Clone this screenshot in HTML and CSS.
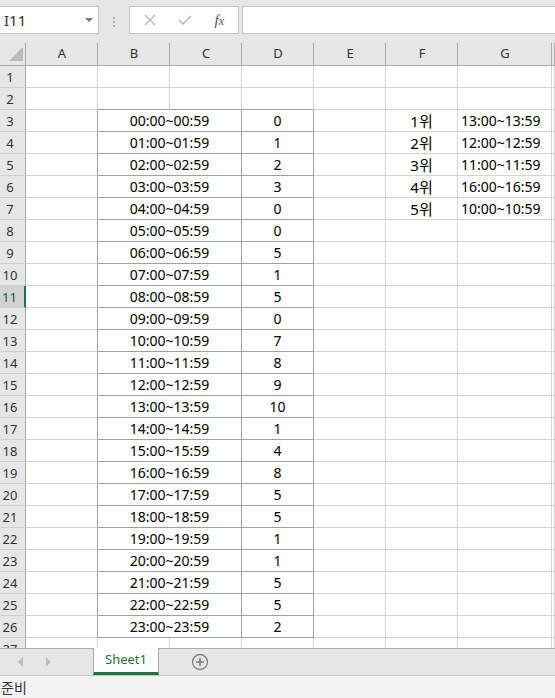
FILE: index.html
```html
<!DOCTYPE html>
<html lang="ko">
<head>
    <meta charset="UTF-8">
    <meta name="viewport" content="width=device-width, initial-scale=1.0">
    <title>Sheet1 - Excel</title>
    <link rel="stylesheet" href="styles.css">
</head>
<body>

    <div class="formula-bar">
        <div class="name-box"><span>I11</span><span class="drop"></span></div>
        <div class="grip"><i></i><i></i><i></i></div>
        <div class="fx-box">
            <svg class="btn-icon" width="12" height="12" viewBox="0 0 12 12">
                <path d="M1 1 L11 11 M11 1 L1 11" stroke="#b8b8b8" stroke-width="1.4" fill="none"/>
            </svg>
            <svg class="btn-icon" width="14" height="12" viewBox="0 0 14 12">
                <path d="M1 6 L5 10 L13 2" stroke="#b8b8b8" stroke-width="1.5" fill="none"/>
            </svg>
            <span class="fx"><i>f</i><i class="fx-sub">x</i></span>
        </div>
        <div class="formula-input"></div>
    </div>

    <div class="col-heads">
        <div class="corner"><span class="tri"></span></div>
        <div class="ch">A</div>
        <div class="ch">B</div>
        <div class="ch">C</div>
        <div class="ch">D</div>
        <div class="ch">E</div>
        <div class="ch">F</div>
        <div class="ch">G</div>
        <div class="ch"></div>
    </div>

    <div class="sheet" id="sheet"></div>

    <div class="tab-bar">
        <span class="nav nav-prev"></span>
        <span class="nav nav-next"></span>
        <div class="tab">Sheet1</div>
        <svg class="add-sheet" width="18" height="18" viewBox="0 0 18 18">
            <circle cx="9" cy="9" r="7.5" stroke="#7f7f7f" stroke-width="1.3" fill="none"/>
            <path d="M9 5 V13 M5 9 H13" stroke="#7f7f7f" stroke-width="1.6"/>
        </svg>
    </div>

    <div class="status">준비</div>

    <script>
        // D열 건수
        const counts = [0, 1, 2, 3, 0, 0, 5, 1, 5, 0, 7, 8, 9, 10, 1, 4, 8, 5, 5, 1, 1, 5, 5, 2];
        const ranks = ["13:00~13:59", "12:00~12:59", "11:00~11:59", "16:00~16:59", "10:00~10:59"];

        function pad(n) {
            return String(n).padStart(2, "0");
        }

        function cell(cls, text) {
            return `<div class="${cls}">${text ?? ""}</div>`;
        }

        let html = "";
        for (let r = 1; r <= 27; r++) {
            const inTable = r >= 3 && r <= 26;
            html += cell(r === 11 ? "rh sel" : "rh", r);
            html += cell(inTable ? "c edge" : "c");

            if (inTable) {
                const h = pad(r - 3);
                html += cell("c t span2", `${h}:00~${h}:59`);
                html += cell("c t", counts[r - 3]);
            } else {
                const cls = r === 2 ? "c top" : "c";
                html += cell(cls) + cell(cls) + cell(cls);
            }

            html += cell("c");
            if (r >= 3 && r <= 7) {
                html += cell("c rank", `${r - 2}위`);
                html += cell("c left", ranks[r - 3]);
            } else {
                html += cell("c") + cell("c");
            }
            html += cell("c");
        }
        document.getElementById("sheet").innerHTML = html;
    </script>

</body>
</html>
```

FILE: styles.css
```css
* {
    box-sizing: border-box;
}

body {
    margin: 0;
    height: 698px;
    display: flex;
    flex-direction: column;
    overflow: hidden;
    font-family: "Noto Sans", "Noto Sans CJK KR", sans-serif;
    background: #fff;
    color: #000;
}

/* formula bar */
.formula-bar {
    height: 34px;
    flex: none;
    display: flex;
    align-items: flex-start;
    padding-top: 6px;
    background: #e6e6e6;
}

.name-box {
    width: 100px;
    height: 28px;
    margin-left: -1px;
    padding: 0 5px 0 4px;
    display: flex;
    align-items: center;
    justify-content: space-between;
    background: #fff;
    border: 1px solid #c6c6c6;
    font-size: 15px;
    color: #333;
}

.drop {
    width: 0;
    height: 0;
    border-left: 4px solid transparent;
    border-right: 4px solid transparent;
    border-top: 4px solid #777;
}

.grip {
    display: flex;
    flex-direction: column;
    gap: 2px;
    margin: 11px 0 0 14px;
}

.grip i {
    width: 2px;
    height: 2px;
    background: #b4b4b4;
}

.fx-box {
    width: 110px;
    height: 28px;
    margin-left: 14px;
    padding: 0 14px 0 14px;
    display: flex;
    align-items: center;
    justify-content: space-between;
    background: #fff;
    border: 1px solid #c6c6c6;
}

.fx {
    font-family: "Liberation Serif", serif;
    font-size: 15px;
    color: #555;
}

.fx-sub {
    font-size: 12px;
}

.formula-input {
    flex: 1;
    height: 28px;
    margin: 0 -2px 0 3px;
    background: #fff;
    border: 1px solid #c6c6c6;
}

/* column headings */
.col-heads,
.sheet {
    display: grid;
    grid-template-columns: 26px repeat(6, 72px) 94px 1fr;
}

.col-heads {
    height: 32px;
    flex: none;
    background: #e6e6e6;
    border-bottom: 1px solid #ababab;
}

.ch,
.corner {
    display: flex;
    align-items: center;
    justify-content: center;
    padding-top: 6px;
    font-size: 13px;
    color: #333;
    background: linear-gradient(#ababab, #ababab) right bottom / 1px 22px no-repeat;
}

.corner {
    align-items: flex-end;
    justify-content: flex-end;
    padding: 0 3px 4px 0;
}

.tri {
    width: 0;
    height: 0;
    border-left: 14px solid transparent;
    border-bottom: 14px solid #bcbcbc;
}

/* cells */
.sheet {
    flex: 1;
    grid-auto-rows: 22px;
    overflow: hidden;
    font-size: 14px;
}

.rh {
    display: flex;
    align-items: center;
    justify-content: center;
    padding-right: 5px;
    background: #e6e6e6;
    border-right: 1px solid #ababab;
    border-bottom: 1px solid #d0d0d0;
    font-size: 13px;
    color: #333;
}

.rh.sel {
    background: #d2d2d2;
    border-right: 2px solid #217346;
    color: #1d5c38;
}

.c {
    display: flex;
    align-items: center;
    justify-content: center;
    border-right: 1px solid #d4d4d4;
    border-bottom: 1px solid #d4d4d4;
    white-space: nowrap;
}

.c.t {
    border-right-color: #a0a0a0;
    border-bottom-color: #a0a0a0;
}

.c.edge {
    border-right-color: #a0a0a0;
}

.c.top {
    border-bottom-color: #a0a0a0;
}

.span2 {
    grid-column: span 2;
}

.c.rank {
    font-size: 15px;
}

.c.left {
    justify-content: flex-start;
    padding-left: 3px;
}

/* sheet tabs */
.tab-bar {
    height: 28px;
    flex: none;
    display: flex;
    align-items: stretch;
    background: #e6e6e6;
    border-top: 1px solid #ababab;
    border-bottom: 1px solid #c6c6c6;
}

.nav {
    align-self: center;
    width: 0;
    height: 0;
    border-top: 5px solid transparent;
    border-bottom: 5px solid transparent;
}

.nav-prev {
    margin-left: 18px;
    border-right: 5px solid #bdbdbd;
}

.nav-next {
    margin-left: 23px;
    border-left: 5px solid #bdbdbd;
}

.tab {
    width: 66px;
    margin: -1px 0 0 42px;
    display: flex;
    align-items: center;
    justify-content: center;
    padding-bottom: 2px;
    background: #fff;
    border: 1px solid #ababab;
    border-top: none;
    border-bottom: 3px solid #217346;
    font-size: 13px;
    color: #217346;
}

.add-sheet {
    align-self: center;
    margin: 0 0 0 32px;
}

.status {
    height: 22px;
    flex: none;
    display: flex;
    align-items: center;
    padding-left: 1px;
    background: #f3f3f3;
    font-size: 14px;
    color: #333;
}
```
